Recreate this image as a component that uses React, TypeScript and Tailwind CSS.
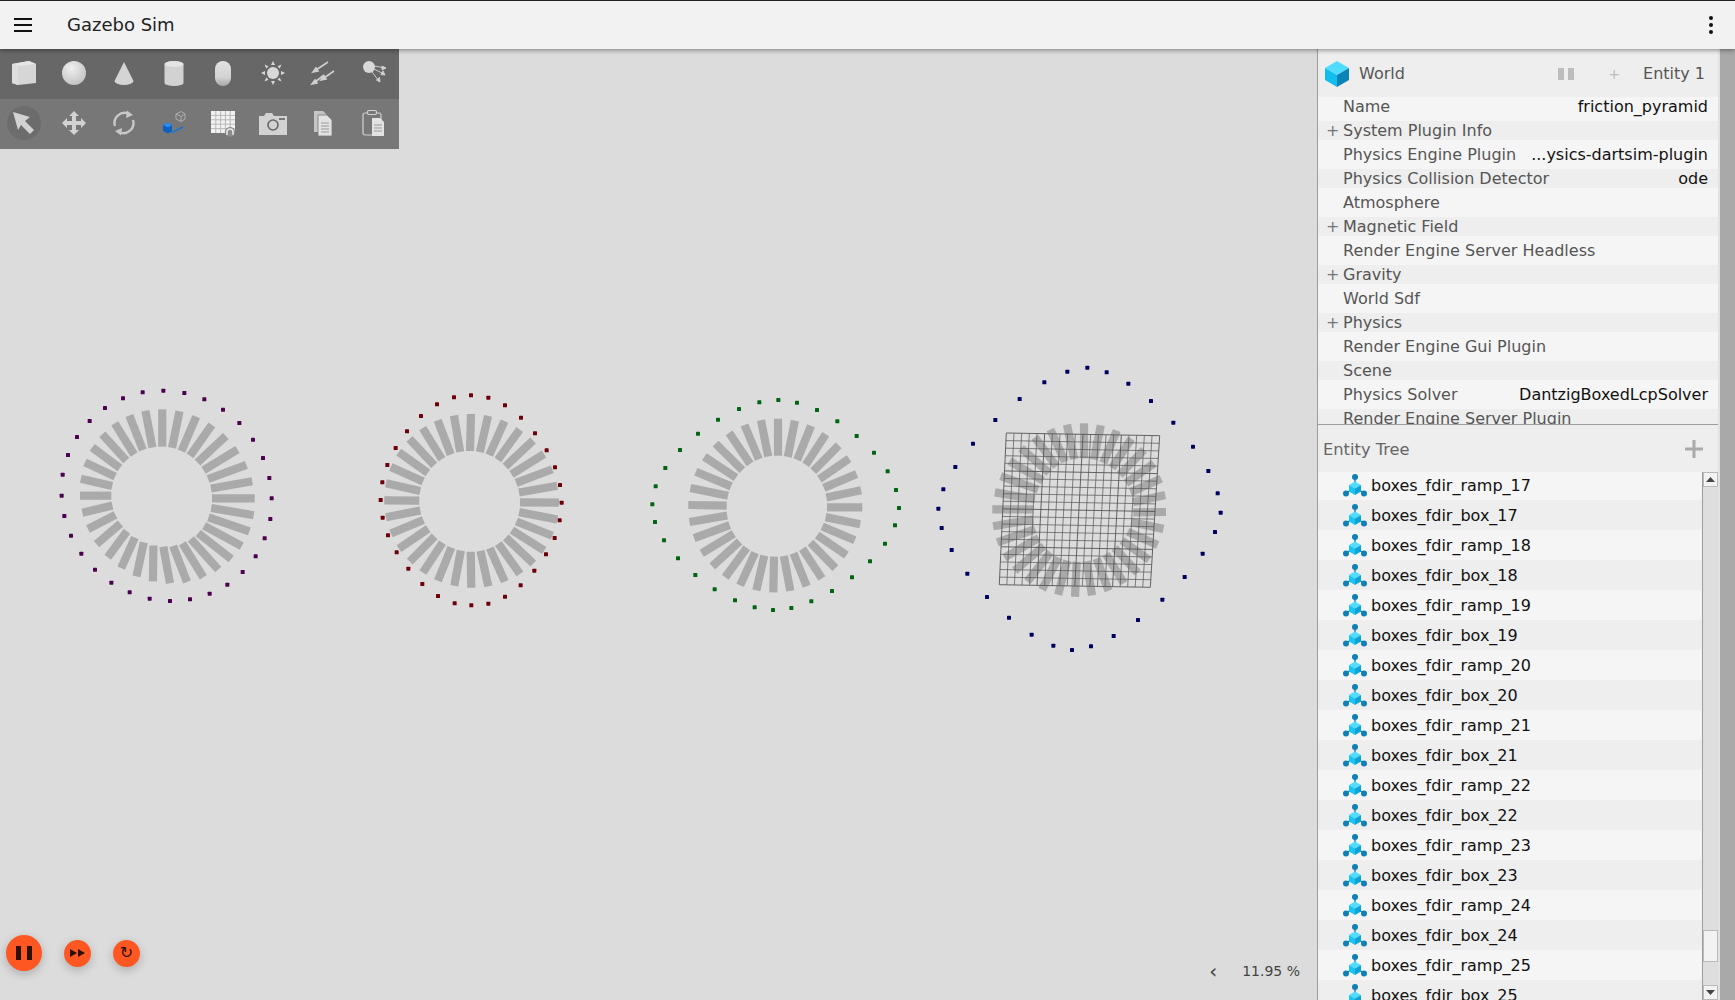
type P = [number, number];

const worldRows = [
  { label: 'Name', value: 'friction_pyramid' },
  { label: 'System Plugin Info', plus: true },
  { label: 'Physics Engine Plugin', value: '...ysics-dartsim-plugin' },
  { label: 'Physics Collision Detector', value: 'ode' },
  { label: 'Atmosphere' },
  { label: 'Magnetic Field', plus: true },
  { label: 'Render Engine Server Headless' },
  { label: 'Gravity', plus: true },
  { label: 'World Sdf' },
  { label: 'Physics', plus: true },
  { label: 'Render Engine Gui Plugin' },
  { label: 'Scene' },
  { label: 'Physics Solver', value: 'DantzigBoxedLcpSolver' },
  { label: 'Render Engine Server Plugin' },
];

const entities: string[] = [];
for (let i = 17; i <= 25; i++) {
  entities.push('boxes_fdir_ramp_' + i, 'boxes_fdir_box_' + i);
}

// dots: clockwise from the top, at 3x around origin; bars: top, right, bottom, left points
const rings: { color: string; origin: P; dots: P[]; inner: P[]; outer: P[] }[] = [
  {
    color: '#4b0050',
    origin: [40, 370],
    dots: [[370, 62], [433, 69], [493, 88], [549, 119], [598, 159], [639, 209], [669, 264], [688, 324], [695, 385], [691, 447], [674, 505], [647, 559], [608, 606], [562, 644], [509, 671], [450, 688], [390, 693], [329, 686], [269, 667], [214, 638], [165, 599], [124, 551], [93, 497], [73, 438], [65, 377], [68, 314], [84, 255], [111, 201], [149, 153], [195, 114], [249, 85], [308, 67]],
    inner: [[162.3, 446.7], [212, 498.3], [163.3, 546.7], [111.3, 495.7]],
    outer: [[162.3, 409.3], [254.7, 498.3], [170, 583.3], [80, 495.7]],
  },
  {
    color: '#6e0008',
    origin: [370, 385],
    dots: [[303, 31], [355, 38], [405, 61], [453, 98], [495, 145], [530, 196], [555, 247], [570, 300], [575, 353], [569, 406], [554, 459], [528, 508], [493, 557], [452, 601], [405, 635], [355, 656], [304, 661], [254, 655], [204, 633], [157, 597], [115, 551], [80, 502], [54, 451], [38, 398], [32, 345], [37, 292], [52, 240], [77, 189], [111, 139], [153, 93], [201, 58], [252, 37]],
    inner: [[470, 451], [520, 502.3], [470.7, 551.7], [419.3, 500.7]],
    outer: [[471, 414], [559, 502.7], [471.3, 587.7], [384.3, 500.3]],
  },
  {
    color: '#006410',
    origin: [640, 390],
    dots: [[415, 30], [471, 38], [531, 60], [592, 94], [650, 138], [702, 188], [743, 244], [768, 300], [777, 354], [765, 406], [735, 461], [690, 514], [636, 562], [576, 603], [514, 634], [454, 654], [399, 660], [344, 652], [285, 631], [224, 598], [166, 555], [114, 505], [72, 451], [45, 396], [37, 343], [47, 289], [76, 234], [120, 180], [174, 131], [234, 89], [297, 57], [358, 37]],
    inner: [[778, 455.7], [827, 507.3], [774, 556.7], [726.7, 505.7]],
    outer: [[778, 418.7], [862.3, 507.3], [773.3, 592.3], [688.3, 505]],
  },
  {
    color: '#00005f',
    origin: [920, 350],
    dots: [[502, 53], [560, 67], [625, 101], [693, 153], [760, 218], [819, 290], [865, 363], [893, 430], [902, 488], [885, 546], [848, 611], [794, 681], [727, 749], [654, 810], [581, 858], [513, 889], [456, 900], [400, 887], [335, 854], [267, 803], [201, 741], [142, 671], [95, 600], [65, 534], [55, 476], [70, 418], [106, 351], [159, 281], [226, 210], [299, 147], [373, 97], [442, 65]],
    inner: [[1084, 458.3], [1133.3, 512.3], [1076.7, 561.7], [1033.3, 509.3]],
    outer: [[1084, 423.3], [1166, 512], [1075, 596.7], [992.3, 509.3]],
  },
];

// curve through the four measured points
const onRing = (pts: P[], k: number): P => {
  const t = (k * Math.PI) / 16;
  const [T, R, B, L] = pts;
  const f = (i: 0 | 1) =>
    (T[i] + R[i] + B[i] + L[i]) / 4 +
    ((R[i] - L[i]) / 2) * Math.cos(t) +
    ((B[i] - T[i]) / 2) * Math.sin(t) +
    ((R[i] + L[i] - T[i] - B[i]) / 4) * Math.cos(2 * t);
  return [f(0), f(1)];
};

const steps = Array.from({ length: 32 }, (_, i) => i);
const grid = Array.from({ length: 21 }, (_, i) => i);
const lerp = (a: P, b: P, t: number): P => [a[0] + (b[0] - a[0]) * t, a[1] + (b[1] - a[1]) * t];
const TL: P = [1006.3, 433];
const TR: P = [1159.7, 435.7];
const BR: P = [1150.3, 587.3];
const BL: P = [999.3, 584.7];

function Scene() {
  return (
    <svg className="absolute inset-0 w-full h-full" viewBox="0 49 1317 951">
      {rings.map((r) => (
        <g key={r.color}>
          {steps.map((k) => {
            const a = onRing(r.inner, k);
            const b = onRing(r.outer, k);
            return <line key={k} x1={a[0]} y1={a[1]} x2={b[0]} y2={b[1]} stroke="#aaaaaa" strokeWidth="8.2" />;
          })}
          {r.dots.map((d, k) => (
            <rect key={k} x={r.origin[0] + d[0] / 3 - 2} y={r.origin[1] + d[1] / 3 - 2} width="4" height="4" rx="0.6" fill={r.color} />
          ))}
        </g>
      ))}
      {grid.map((i) => {
        const a = lerp(TL, TR, i / 20);
        const b = lerp(BL, BR, i / 20);
        const c = lerp(TL, BL, i / 20);
        const d = lerp(TR, BR, i / 20);
        return (
          <g key={i} stroke="#555" strokeOpacity={i % 5 === 0 ? 0.9 : 0.7} strokeWidth="1">
            <line x1={a[0]} y1={a[1]} x2={b[0]} y2={b[1]} />
            <line x1={c[0]} y1={c[1]} x2={d[0]} y2={d[1]} />
          </g>
        );
      })}
    </svg>
  );
}

const Icon = ({ children }: { children: React.ReactNode }) => (
  <svg width="30" height="30" viewBox="0 0 30 30">
    {children}
  </svg>
);

const shapeIcons = [
  <Icon key="box">
    <path d="M3 6 L20 3 L27 6 L27 25 L9 27 L3 25 Z" fill="#d6d6d6" />
    <path d="M3 6 L20 3 L27 6 L9 8 Z" fill="#e6e6e6" />
    <path d="M3 6 L9 8 L9 27 L3 25 Z" fill="#dddddd" />
  </Icon>,
  <Icon key="sphere">
    <defs>
      <radialGradient id="sph" cx="0.4" cy="0.3" r="0.8">
        <stop offset="0" stopColor="#f0f0f0" />
        <stop offset="1" stopColor="#bdbdbd" />
      </radialGradient>
      <linearGradient id="cap" x1="0" y1="0" x2="0" y2="1">
        <stop offset="0" stopColor="#e2e2e2" />
        <stop offset="0.65" stopColor="#d2d2d2" />
        <stop offset="1" stopColor="#a6a6a6" />
      </linearGradient>
    </defs>
    <circle cx="15" cy="15" r="12" fill="url(#sph)" />
  </Icon>,
  <Icon key="cone">
    <path d="M15 4 L24.5 23 A9.5 4 0 0 1 5.5 23 Z" fill="#d4d4d4" />
  </Icon>,
  <Icon key="cylinder">
    <path d="M5.5 6 A9.5 3 0 0 1 24.5 6 L24.5 25 A9.5 3 0 0 1 5.5 25 Z" fill="#d2d2d2" />
    <ellipse cx="15" cy="6" rx="9.5" ry="3" fill="#e4e4e4" />
  </Icon>,
  <Icon key="capsule">
    <rect x="7" y="3" width="16" height="25" rx="8" fill="url(#cap)" />
  </Icon>,
  <Icon key="sun">
    <circle cx="15" cy="15" r="6" fill="#d8d8d8" />
    <g fill="#d8d8d8">
      <path d="M15 3 L17 7 H13 Z" />
      <path d="M15 27 L17 23 H13 Z" />
      <path d="M3 15 L7 13 V17 Z" />
      <path d="M27 15 L23 13 V17 Z" />
      <path d="M6.5 6.5 L10.5 8.3 L8.3 10.5 Z" />
      <path d="M23.5 6.5 L19.5 8.3 L21.7 10.5 Z" />
      <path d="M6.5 23.5 L10.5 21.7 L8.3 19.5 Z" />
      <path d="M23.5 23.5 L19.5 21.7 L21.7 19.5 Z" />
    </g>
  </Icon>,
  <Icon key="dir">
    <g stroke="#cfcfcf" strokeWidth="1.6" fill="#cfcfcf">
      <path d="M20 4 L8 12" />
      <path d="M5 14 L10 13 L8 10 Z" />
      <path d="M26 13 L16 20" />
      <path d="M13 22 L18 21 L16 18 Z" />
      <path d="M16 17 L7 24" />
      <path d="M4 26 L9 25 L7 22 Z" />
    </g>
  </Icon>,
  <Icon key="spot">
    <circle cx="11" cy="9" r="6" fill="#d8d8d8" />
    <g stroke="#cfcfcf" strokeWidth="1" fill="#cfcfcf">
      <path d="M16 8 L27 10" />
      <path d="M28 10 L24 8 V12 Z" />
      <path d="M16 11 L26 16" />
      <path d="M27 17 L23 16.5 L25 13 Z" />
      <path d="M14 14 L21 23" />
      <path d="M22 24 L18.5 22 L21.5 19.5 Z" />
    </g>
  </Icon>,
];

const toolIcons = [
  <Icon key="select">
    <path d="M4 4 L21 9 L16 13 L25 22 L21 26 L12 17 L9 22 Z" fill="#d2d2d2" />
  </Icon>,
  <Icon key="move">
    <path
      d="M15 3 L20 8 H17 V13 H22 V10 L27 15 L22 20 V17 H17 V22 H20 L15 27 L10 22 H13 V17 H8 V20 L3 15 L8 10 V13 H13 V8 H10 Z"
      fill="#d2d2d2"
    />
  </Icon>,
  <Icon key="rotate">
    <g fill="none" stroke="#c8c8c8" strokeWidth="2.4">
      <path d="M6 18 A10 10 0 0 1 20 6" />
      <path d="M24 12 A10 10 0 0 1 10 24" />
    </g>
    <path d="M18 2.5 L24 7 L17 10 Z M12 27.5 L6 23 L13 20 Z" fill="#c8c8c8" />
  </Icon>,
  <Icon key="snap">
    <path d="M17 6 L22 3.5 L26 6 V11 L22 13.5 L17 11 Z" fill="none" stroke="#b0b0b0" strokeWidth="1" />
    <path d="M17 6 L22 8.5 L26 6 M22 8.5 V13.5" fill="none" stroke="#b0b0b0" strokeWidth="1" />
    <path d="M9 22 L13 24.5 L24 19" fill="none" stroke="#1976d2" strokeWidth="1.4" />
    <path d="M4 17 L9 14.5 L13 17 V23 L9 25.5 L4 23 Z" fill="#0d5fc0" />
    <path d="M4 17 L9 14.5 L13 17 L9 19.5 Z" fill="#2f8cf0" />
  </Icon>,
  <Icon key="gridplane">
    <rect x="3" y="3" width="24" height="22" fill="#f2f2f2" />
    <path
      d="M7.8 3 V25 M12.6 3 V25 M17.4 3 V25 M22.2 3 V25 M3 7.4 H27 M3 11.8 H27 M3 16.2 H27 M3 20.6 H27"
      stroke="#b8b8b8"
      strokeWidth="1"
    />
    <circle cx="22" cy="24" r="5" fill="#8a8a8a" />
    <path d="M19 27 V24 A3 3 0 0 1 25 24 V27" fill="none" stroke="#eee" strokeWidth="1.4" />
  </Icon>,
  <Icon key="camera">
    <path d="M1 8 H6 L8 5 H14 L16 8 H29 V27 H1 Z" fill="#d2d2d2" />
    <circle cx="15" cy="17" r="5" fill="none" stroke="#666" strokeWidth="1.6" />
    <rect x="21" y="10" width="6" height="2" fill="#777" />
  </Icon>,
  <Icon key="copy">
    <path d="M6 3 H15 L20 8 V24 H6 Z" fill="#c4c4c4" />
    <path d="M10 7 H19 L24 12 V28 H10 Z" fill="#e2e2e2" stroke="#777" strokeWidth="0.8" />
    <path d="M13 15 H21 M13 18 H21 M13 21 H21 M13 24 H21" stroke="#9a9a9a" strokeWidth="1" />
  </Icon>,
  <Icon key="paste">
    <rect x="5" y="5" width="18" height="22" rx="2" fill="none" stroke="#d2d2d2" strokeWidth="1.2" />
    <rect x="9.5" y="2.5" width="9" height="4" rx="1.5" fill="#777" stroke="#d2d2d2" strokeWidth="1.2" />
    <path d="M14 10 H22 L26 14 V28 H14 Z" fill="#e2e2e2" />
    <path d="M16 17 H24 M16 20 H24 M16 23 H24" stroke="#9a9a9a" strokeWidth="1" />
  </Icon>,
];

function Toolbar() {
  return (
    <div className="absolute top-0 left-0 w-[399px] flex flex-col overflow-hidden">
      <div className="flex h-[50px] bg-[#676767] pb-[2px]">
        {shapeIcons.map((icon, i) => (
          <div key={i} className="w-[50px] -translate-x-[1px] flex items-center justify-center">
            {icon}
          </div>
        ))}
      </div>
      <div className="flex h-[50px] bg-[#777777] pb-[2px]">
        {toolIcons.map((icon, i) => (
          <div key={i} className="w-[50px] -translate-x-[1px] flex items-center justify-center">
            <div className={'w-[34px] h-[34px] rounded-full flex items-center justify-center ' + (i === 0 ? 'bg-[#6c6c6c]' : '')}>
              {icon}
            </div>
          </div>
        ))}
      </div>
    </div>
  );
}

function SimControls() {
  return (
    <div className="absolute left-[6px] bottom-[29px] flex items-center">
      <div className="w-9 h-9 rounded-full bg-[#ff5722] shadow-[0_3px_10px_rgba(0,0,0,0.22)] flex items-center justify-center gap-[6px]">
        <div className="w-[5px] h-[14px] bg-[#2b1006]" />
        <div className="w-[5px] h-[14px] bg-[#2b1006]" />
      </div>
      <div className="ml-[22px] w-[27px] h-[27px] rounded-full bg-[#ff5722] shadow-[0_3px_10px_rgba(0,0,0,0.22)] flex items-center justify-center">
        <svg width="15" height="8" viewBox="0 0 15 8">
          <path d="M0 0 L7 4 L0 8 Z M8 0 L15 4 L8 8 Z" fill="#2b1006" />
        </svg>
      </div>
      <div className="ml-[22px] w-[27px] h-[27px] rounded-full bg-[#ff5722] shadow-[0_3px_10px_rgba(0,0,0,0.22)] flex items-center justify-center text-[16px] leading-none text-[#2b1006]">
        ↻
      </div>
    </div>
  );
}

function WorldCube() {
  return (
    <svg width="26" height="28" viewBox="0 0 26 28" className="-ml-[1px]">
      <path d="M13 1 L25 8 L13 15 L1 8 Z" fill="#4fdcff" />
      <path d="M1 8 L13 15 V27 L1 20 Z" fill="#12bdee" />
      <path d="M25 8 L13 15 V27 L25 20 Z" fill="#0a84b6" />
    </svg>
  );
}

function ModelIcon() {
  return (
    <svg width="24" height="24" viewBox="0 0 24 24" className="shrink-0">
      <path d="M12 3 V10 M3 19 L8 16 M21 19 L16 16" stroke="#0f7fb5" strokeWidth="1.4" />
      <circle cx="12" cy="3" r="3" fill="#0f7fb5" />
      <circle cx="3" cy="19.5" r="3" fill="#0f7fb5" />
      <circle cx="21" cy="19.5" r="3" fill="#0f7fb5" />
      <path d="M12 7.5 L18 11 L12 14.5 L6 11 Z" fill="#52dcff" />
      <path d="M6 11 L12 14.5 V21 L6 17.5 Z" fill="#18c4f0" />
      <path d="M18 11 L12 14.5 V21 L18 17.5 Z" fill="#0ea3d6" />
    </svg>
  );
}

function Panel() {
  return (
    <div className="w-[418px] shrink-0 flex bg-[#dcdcdc] overflow-hidden">
      <div className="w-[401px] border-l border-[#9c9c9c] flex flex-col">
        <div className="h-[48px] shrink-0 bg-[#eeeeee] flex items-center pl-[7px] pr-[13px] pt-[2px] text-[#555]">
          <WorldCube />
          <span className="ml-[9px]">World</span>
          <div className="ml-auto flex gap-[4px]">
            <div className="w-[6px] h-[12px] bg-[#bdbdbd]" />
            <div className="w-[6px] h-[12px] bg-[#bdbdbd]" />
          </div>
          <span className="ml-[34px] text-[#bdbdbd] text-[14px]">+</span>
          <span className="ml-[23px]">Entity 1</span>
        </div>
        <div className="h-[327px] shrink-0 overflow-hidden bg-[#f5f5f5] flex flex-col gap-[5px]">
          {worldRows.map((r, i) => (
            <div
              key={r.label}
              className={'h-[19px] shrink-0 flex items-center pl-[25px] pr-[10px] leading-[19px] ' + (i % 2 ? 'bg-[#eeeeee]' : '')}
            >
              <span className="w-[17px] -ml-[17px] text-[#777]">{r.plus ? '+' : ''}</span>
              <span className="text-[#555]">{r.label}</span>
              {r.value && <span className="ml-auto text-[#111]">{r.value}</span>}
            </div>
          ))}
        </div>
        <div className="h-[48px] shrink-0 border-t border-[#9c9c9c] bg-[#eeeeee] flex items-center pl-[5px] pr-[15px] pt-[4px] text-[#666]">
          <span className="text-[16.3px]">Entity Tree</span>
          <svg className="ml-auto -mt-[4px]" width="18" height="18" viewBox="0 0 18 18">
            <path d="M0 9 H18 M9 0 V18" stroke="#aaa" strokeWidth="3" />
          </svg>
        </div>
        <div className="flex-1 flex min-h-0">
          <div className="flex-1 overflow-hidden">
            <div className="-mt-[2px]">
              {entities.map((e, i) => (
                <div
                  key={e}
                  className={'h-[30px] flex items-center pl-[25px] pt-[2px] gap-[4px] text-[#111] ' + (i % 2 ? 'bg-[#eeeeee]' : 'bg-[#f5f5f5]')}
                >
                  <ModelIcon />
                  <span>{e}</span>
                </div>
              ))}
            </div>
          </div>
          <div className="w-[16px] shrink-0 border-l border-[#9c9c9c] bg-[#dedede] flex flex-col">
            <div className="h-[15px] bg-[#f2f2f2] border border-[#bbb] flex items-center justify-center">
              <svg width="9" height="5" viewBox="0 0 9 5">
                <path d="M0 5 L4.5 0 L9 5 Z" fill="#444" />
              </svg>
            </div>
            <div className="mt-[443px] h-[32px] bg-[#f2f2f2] border border-[#bbb]" />
            <div className="mt-[23px] h-[15px] bg-[#f2f2f2] border border-[#bbb] flex items-center justify-center">
              <svg width="9" height="5" viewBox="0 0 9 5">
                <path d="M0 0 L4.5 5 L9 0 Z" fill="#444" />
              </svg>
            </div>
          </div>
        </div>
      </div>
      <div className="w-[2px] shrink-0 bg-[#e2e2e2]" />
      <div className="flex-1 bg-[#a9a9a9]" />
    </div>
  );
}

export default function App() {
  return (
    <div className="h-screen flex flex-col overflow-hidden bg-[#dcdcdc] font-['DejaVu_Sans',sans-serif] text-[16px]">
      <header className="relative z-10 h-[49px] shrink-0 border-t border-[#222] bg-[#f2f2f2] shadow-[0_1px_5px_rgba(0,0,0,0.45)] flex items-center pl-[14px] pr-[22px]">
        <svg width="18" height="14" viewBox="0 0 18 14">
          <path d="M0 1 H18 M0 7 H18 M0 13 H18" stroke="#111" strokeWidth="2" />
        </svg>
        <span className="ml-[35px] -mt-[2px] text-[18px] text-[#222]">Gazebo Sim</span>
        <div className="ml-auto flex flex-col gap-[3px]">
          <div className="w-[4px] h-[4px] rounded-full bg-[#111]" />
          <div className="w-[4px] h-[4px] rounded-full bg-[#111]" />
          <div className="w-[4px] h-[4px] rounded-full bg-[#111]" />
        </div>
      </header>
      <main className="flex-1 flex min-h-0">
        <div className="relative flex-1">
          <Scene />
          <Toolbar />
          <SimControls />
          <div className="absolute right-[17px] bottom-[18px] flex items-center text-[14px] text-[#444]">
            <span className="mr-[25px] text-[20px] leading-none -mt-[2px]">‹</span>
            <span>11.95 %</span>
          </div>
        </div>
        <Panel />
      </main>
    </div>
  );
}
